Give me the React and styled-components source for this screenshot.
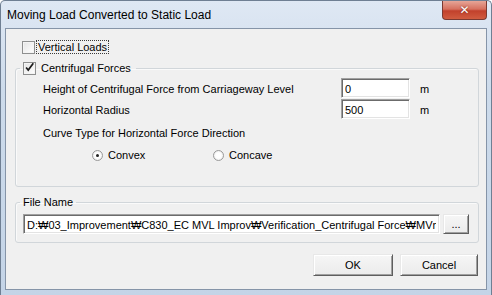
import React from 'react';
import styled, { createGlobalStyle } from 'styled-components';

const GlobalStyle = createGlobalStyle`
  html, body {
    margin: 0;
    padding: 0;
    background: #ffffff;
  }
  body {
    font-family: 'Liberation Sans', 'Noto Sans CJK KR', sans-serif;
    font-size: 11px;
    color: #000;
  }
`;

const Window = styled.div`
  width: 492px;
  height: 295px;
  box-sizing: border-box;
  display: flex;
  flex-direction: column;
  border: 1px solid #6f7f93;
  border-bottom: none;
  border-radius: 5px 5px 0 0;
  background: linear-gradient(to bottom, #dfe8f4 0%, #cddbeb 30%, #c4d4e7 100%);
`;

const TitleBar = styled.div`
  height: 27px;
  display: flex;
  justify-content: space-between;
  padding-left: 6px;
`;

const Title = styled.span`
  font-size: 12px;
  line-height: 27px;
  padding-top: 1px;
  color: #000;
`;

const CloseButton = styled.div`
  width: 45px;
  height: 19px;
  margin-right: 4px;
  box-sizing: border-box;
  border: 1px solid #7a3a32;
  border-top: none;
  border-radius: 0 0 4px 4px;
  background: linear-gradient(to bottom, #e6a597 0%, #d6715f 45%, #c2412c 55%, #d15c40 100%);
  display: flex;
  align-items: center;
  justify-content: center;
  color: #fff;
  font-family: 'DejaVu Sans', sans-serif;
  font-weight: bold;
  font-size: 12px;
  text-shadow: 0 0 2px #6d1f12;
`;

const Client = styled.div`
  flex: 1;
  margin: 0 4px 5px 4px;
  background: #f0f0f0;
  border: 1px solid #8594a8;
  display: flex;
  flex-direction: column;
`;

const CheckRow = styled.label`
  display: flex;
  align-items: center;
  height: 14px;
  margin: ${(p) => p.$margin || '0'};
`;

const Box = styled.span`
  width: 13px;
  height: 13px;
  box-sizing: border-box;
  border: 1px solid #8e8f8f;
  background: linear-gradient(135deg, #e4e4e4 0%, #ffffff 100%);
  box-shadow: inset 0 0 0 1px #f4f4f4;
  display: flex;
  align-items: center;
  justify-content: center;
  overflow: visible;
`;

const CheckText = styled.span`
  margin-left: ${(p) => (p.$focus ? '1px' : '3px')};
  padding: 0 1px;
  line-height: 12px;
  border: 1px ${(p) => (p.$focus ? 'dotted #3a3a3a' : 'solid transparent')};
`;

const Group = styled.fieldset`
  margin: ${(p) => p.$margin};
  padding: 0;
  border: 1px solid #d1d6da;
  border-radius: 3px;
  box-shadow: inset 1px 1px 0 #fafafa;
  min-inline-size: 0;
`;

const Legend = styled.legend`
  margin-left: 4px;
  padding: 0 3px;
  height: 14px;
  line-height: 14px;
`;

const GroupBody = styled.div`
  padding: ${(p) => p.$padding};
  display: flex;
  flex-direction: column;
`;

const FieldRow = styled.div`
  display: flex;
  align-items: center;
  height: 20px;
  margin-top: ${(p) => p.$gap || 0}px;
`;

const Label = styled.span`
  width: 298px;
  padding-top: 2px;
  white-space: nowrap;
`;

const TextBox = styled.input`
  width: ${(p) => p.$width || '69px'};
  height: 20px;
  box-sizing: border-box;
  margin: 0;
  padding: 2px 3px 0 3px;
  font-family: 'Liberation Sans', 'Noto Sans CJK KR', sans-serif;
  font-size: 11px;
  color: #000;
  background: #fff;
  border-style: solid;
  border-width: 1px;
  border-color: #a0a0a0 #ffffff #ffffff #a0a0a0;
  box-shadow: inset 1px 1px 0 #6b6b6b, inset -1px -1px 0 #e3e3e3;
  outline: none;
`;

const Unit = styled.span`
  margin-left: 10px;
  padding-top: 2px;
`;

const TextLine = styled.div`
  height: 14px;
  line-height: 14px;
  margin-top: ${(p) => p.$gap}px;
  padding-left: ${(p) => p.$indent || 0}px;
  display: flex;
  align-items: center;
`;

const RadioItem = styled.span`
  width: 121px;
  display: flex;
  align-items: center;
`;

const RadioDot = styled.span`
  width: 11px;
  height: 11px;
  box-sizing: border-box;
  border-radius: 50%;
  border: 1px solid #9a9a9a;
  background: radial-gradient(circle, #ffffff 40%, #e2e2e2 100%);
  display: flex;
  align-items: center;
  justify-content: center;
  margin-right: 5px;

  &::after {
    content: '';
    width: 3px;
    height: 3px;
    border-radius: 50%;
    background: ${(p) => (p.$checked ? '#222' : 'transparent')};
  }
`;

const FileRow = styled.div`
  display: flex;
  align-items: flex-start;
  gap: 3px;
`;

const Button = styled.button`
  width: ${(p) => p.$width}px;
  height: ${(p) => p.$height}px;
  margin: 0;
  padding: 0;
  box-sizing: border-box;
  font-family: 'Liberation Sans', sans-serif;
  font-size: 11px;
  color: #000;
  background: linear-gradient(to bottom, #f6f6f6 0%, #ebebeb 100%);
  border-style: solid;
  border-width: 1px;
  border-color: #e8e8e8 #5e5e5e #5e5e5e #e8e8e8;
  box-shadow: inset 1px 1px 0 #ffffff, inset -1px -1px 0 #a0a0a0;
`;

const ButtonRow = styled.div`
  display: flex;
  justify-content: flex-end;
  gap: 7px;
  margin: 11px 8px 0 0;
`;

const Check = () => (
  <svg width="13" height="13" viewBox="0 0 13 13" style={{ marginTop: '-2px' }}>
    <path d="M2.5 6.5 L5 9.5 L11 1.5" fill="none" stroke="#1c1c1c" strokeWidth="2" />
  </svg>
);

const filePath =
  'D:₩03_Improvement₩C830_EC MVL Improv₩Verification_Centrifugal Force₩MVmap.txt';

export default function App() {
  return (
    <>
      <GlobalStyle />
      <Window>
        <TitleBar>
          <Title>Moving Load Converted to Static Load</Title>
          <CloseButton>✕</CloseButton>
        </TitleBar>
        <Client>
          <CheckRow $margin="11px 0 0 16px">
            <Box />
            <CheckText $focus>Vertical Loads</CheckText>
          </CheckRow>

          <Group $margin="7px 7px 0 9px">
            <Legend>
              <CheckRow>
                <Box>
                  <Check />
                </Box>
                <CheckText>Centrifugal Forces</CheckText>
              </CheckRow>
            </Legend>
            <GroupBody $padding="3px 0 24px 27px">
              <FieldRow>
                <Label>Height of Centrifugal Force from Carriageway Level</Label>
                <TextBox readOnly value="0" />
                <Unit>m</Unit>
              </FieldRow>
              <FieldRow $gap={1}>
                <Label>Horizontal Radius</Label>
                <TextBox readOnly value="500" />
                <Unit>m</Unit>
              </FieldRow>
              <TextLine $gap={7}>Curve Type for Horizontal Force Direction</TextLine>
              <TextLine $gap={8} $indent={49}>
                <RadioItem>
                  <RadioDot $checked />
                  Convex
                </RadioItem>
                <RadioItem>
                  <RadioDot />
                  Concave
                </RadioItem>
              </TextLine>
            </GroupBody>
          </Group>

          <Group $margin="8px 7px 0 9px">
            <Legend>File Name</Legend>
            <GroupBody $padding="5px 9px 8px 7px">
              <FileRow>
                <TextBox readOnly value={filePath} $width="417px" />
                <Button $width={26} $height={20}>...</Button>
              </FileRow>
            </GroupBody>
          </Group>

          <ButtonRow>
            <Button $width={80} $height={22}>OK</Button>
            <Button $width={78} $height={22}>Cancel</Button>
          </ButtonRow>
        </Client>
      </Window>
    </>
  );
}
